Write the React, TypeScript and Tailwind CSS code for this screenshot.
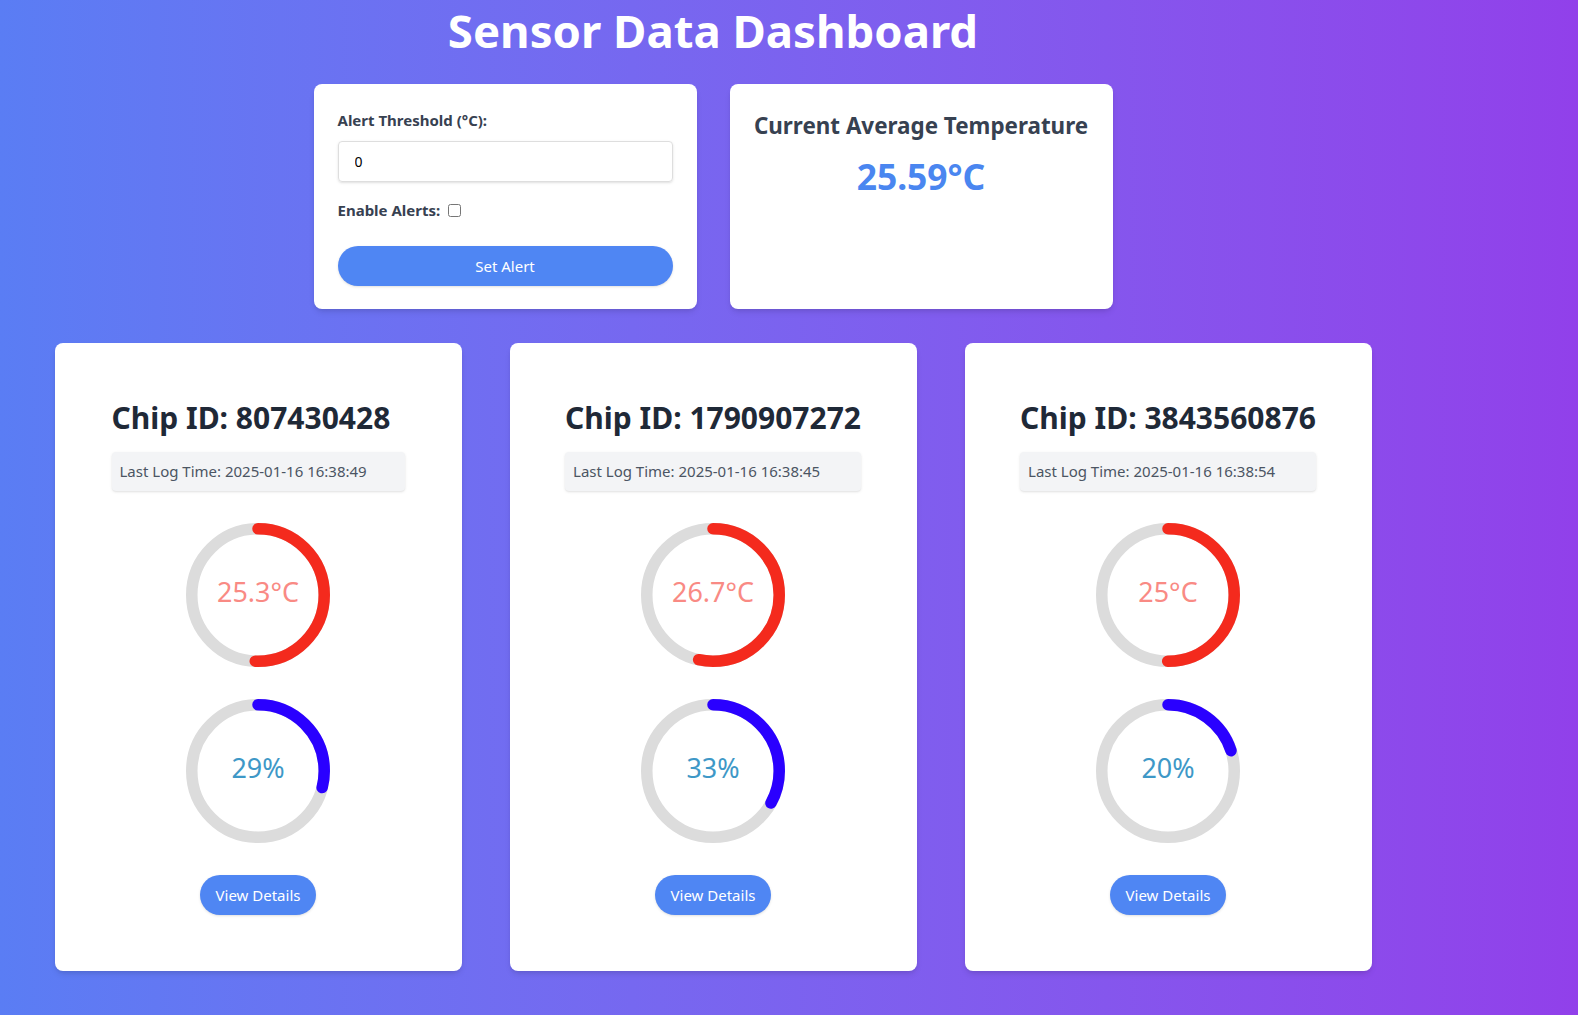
import React from "react";

type Chip = {
  id: string;
  time: string;
  temp: number;
  humidity: number;
};

const chips: Chip[] = [
  { id: "807430428", time: "2025-01-16 16:38:49", temp: 25.3, humidity: 29 },
  { id: "1790907272", time: "2025-01-16 16:38:45", temp: 26.7, humidity: 33 },
  { id: "3843560876", time: "2025-01-16 16:38:54", temp: 25, humidity: 20 },
];

const font = { fontFamily: '"Noto Sans", "Open Sans", sans-serif' };

function Gauge({ pct, color, text, textColor }: { pct: number; color: string; text: string; textColor: string }) {
  const r = 46;
  const c = 2 * Math.PI * r;
  return (
    <svg width="144" height="144" viewBox="0 0 100 100" className="block">
      <circle cx="50" cy="50" r={r} fill="none" stroke="#dcdcdc" strokeWidth="8" />
      <circle
        cx="50"
        cy="50"
        r={r}
        fill="none"
        stroke={color}
        strokeWidth="8"
        strokeLinecap="round"
        strokeDasharray={`${(c * pct) / 100} ${c}`}
        transform="rotate(-90 50 50)"
      />
      <text x="50" y="47.8" textAnchor="middle" dominantBaseline="central" fontSize="18.7" fill={textColor} style={font}>
        {text}
      </text>
    </svg>
  );
}

function ChipCard({ chip }: { chip: Chip }) {
  return (
    <div className="w-[407px] h-[628px] bg-white rounded-lg shadow-md pt-[55px] flex flex-col items-center">
      <div className="w-max min-w-[293px]">
        <h2 className="text-[30px] leading-[40px] font-bold text-[#1f2937] whitespace-nowrap">Chip ID: {chip.id}</h2>
        <div className="mt-[14px] h-[39px] flex items-center px-2 bg-[#f3f4f6] rounded shadow-sm text-[15px] text-[#4b5563] whitespace-nowrap">
          Last Log Time: {chip.time}
        </div>
      </div>
      <div className="mt-[32px]">
        <Gauge pct={(chip.temp / 50) * 100} color="#f42a1d" text={`${chip.temp}°C`} textColor="#f98a84" />
      </div>
      <div className="mt-[32px]">
        <Gauge pct={chip.humidity} color="#2a00ff" text={`${chip.humidity}%`} textColor="#3e98c7" />
      </div>
      <button className="mt-[32px] h-[40px] px-4 rounded-full bg-[#4f86f3] text-white text-[15px] shadow-sm">
        View Details
      </button>
    </div>
  );
}

export default function App() {
  return (
    <div className="min-h-screen w-full bg-gradient-to-r from-[#5a7df4] to-[#9140ea]" style={font}>
      <div className="w-[1426px] flex flex-col items-center">
        {/* Header */}
        <h1 className="mt-[1px] text-[45.5px] leading-[58px] font-bold text-white">Sensor Data Dashboard</h1>

        {/* Alert + average */}
        <div className="mt-[25px] flex gap-[33px]">
          <div className="w-[383px] h-[225px] bg-white rounded-lg shadow-md px-6 pt-6">
            <label className="block text-[15px] leading-[24px] font-bold text-[#374151]">Alert Threshold (°C):</label>
            <input
              type="number"
              defaultValue={0}
              className="mt-[9px] w-full h-[41px] px-4 border border-[#dedede] rounded text-[14px] text-black shadow-sm outline-none"
            />
            <div className="mt-[16px] flex items-center gap-2 text-[15px] leading-[24px] font-bold text-[#374151]">
              Enable Alerts:
              <input type="checkbox" className="w-[13px] h-[13px]" />
            </div>
            <button className="mt-[24px] w-full h-[40px] rounded-full bg-[#4f86f3] text-white text-[15px] shadow-sm">
              Set Alert
            </button>
          </div>
          <div className="w-[383px] h-[225px] bg-white rounded-lg shadow-md pt-[26px] flex flex-col items-center">
            <h3 className="text-[22.4px] leading-[32px] font-bold text-[#374151]">Current Average Temperature</h3>
            <p className="mt-[12px] text-[35.4px] leading-[44px] font-bold text-[#4a86f0]">25.59°C</p>
          </div>
        </div>

        {/* Chips */}
        <div className="mt-[34px] flex gap-[48px]">
          {chips.map((c) => (
            <ChipCard key={c.id} chip={c} />
          ))}
        </div>
      </div>
    </div>
  );
}
